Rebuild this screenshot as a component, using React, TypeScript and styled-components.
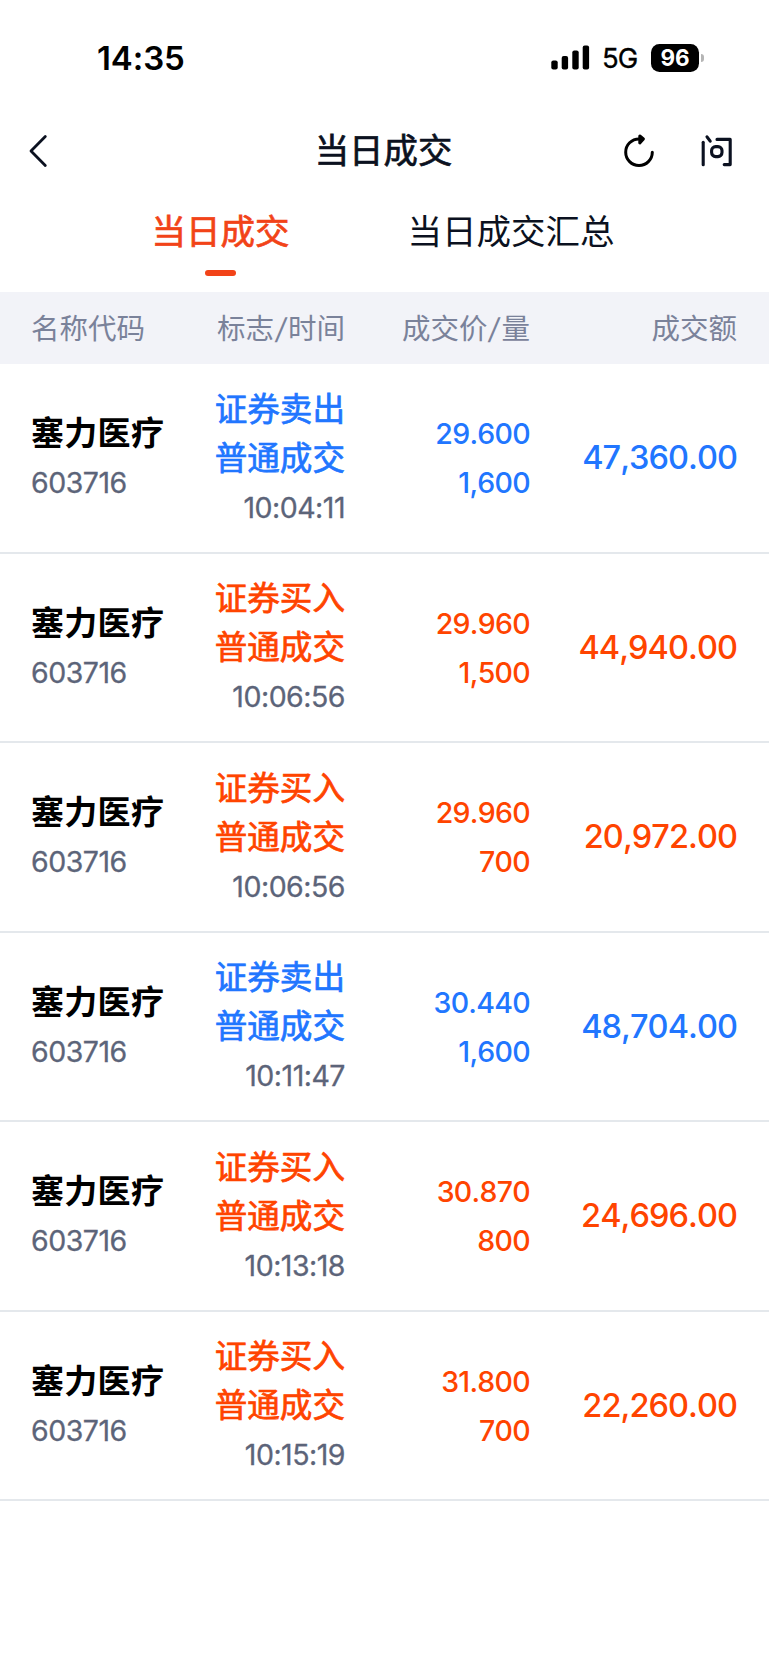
import React from "react";
import styled, { createGlobalStyle } from "styled-components";

const BLUE = "#2176ff";
const RED = "#ff4400";

const Global = createGlobalStyle`
  body {
    margin: 0;
    background: #fff;
    font-family: Inter, "Noto Sans CJK SC", sans-serif;
    font-kerning: none;
    color: #0b1120;
  }
`;

const Screen = styled.main`
  width: 769px;
  height: 1665px;
  overflow: hidden;
  background: #fff;
`;

const StatusBar = styled.header`
  height: 115px;
  box-sizing: border-box;
  padding: 0 65px 0 97px;
  display: flex;
  align-items: center;
  justify-content: space-between;
  color: #000;
`;

const Clock = styled.time`
  font-size: 33px;
  font-weight: 600;
  line-height: 40px;
  letter-spacing: -0.1px;
`;

const StatusRight = styled.div`
  display: flex;
  align-items: center;
`;

const Network = styled.span`
  margin-left: 12px;
  width: 37px;
  font-size: 27.5px;
  line-height: 32px;
  letter-spacing: -1px;
  padding-top: 1px;
  -webkit-text-stroke: 0.3px currentColor;
`;

const Battery = styled.span`
  margin-left: 12px;
  width: 48px;
  height: 28px;
  border-radius: 8.5px;
  background: #000;
  color: #fff;
  font-size: 22.5px;
  font-weight: 700;
  line-height: 28px;
  text-align: center;
`;

const BatteryTip = styled.span`
  margin-left: 2px;
  width: 3px;
  height: 8px;
  border-radius: 0 3px 3px 0;
  background: #b5b5b5;
`;

const NavBar = styled.nav`
  height: 72px;
  display: grid;
  grid-template-columns: 202px 1fr 196px;
  align-items: center;
  box-sizing: border-box;
  padding: 0 36px 0 28px;
`;

const Title = styled.h1`
  margin: 0;
  text-align: center;
  font-size: 34.4px;
  font-weight: 400;
  line-height: 48px;
  -webkit-text-stroke: 0.7px currentColor;
`;

const IconButton = styled.button`
  border: 0;
  padding: 0;
  background: none;
  color: inherit;
  display: flex;
`;

const NavActions = styled.div`
  display: flex;
  justify-content: flex-end;
  gap: 46px;
  padding-bottom: 1px;
`;

const Tabs = styled.div`
  height: 105px;
  display: flex;
  gap: 118px;
  padding-left: 151.5px;
`;

const Tab = styled.div<{ $active?: boolean }>`
  display: flex;
  flex-direction: column;
  align-items: center;
  padding-top: 20px;
  font-size: 34.5px;
  line-height: 49px;
  color: ${(p) => (p.$active ? "#f24318" : "#0b1120")};
  -webkit-text-stroke: ${(p) => (p.$active ? "0.7px" : "0")} currentColor;
`;

const TabMark = styled.span`
  margin-top: 13.5px;
  width: 31px;
  height: 6px;
  border-radius: 3px;
  background: #f24318;
`;

const columns = `
  display: grid;
  grid-template-columns: 110px 204px 185px 207px;
  align-items: center;
  box-sizing: border-box;
`;

const TableHead = styled.div`
  ${columns}
  padding: 2px 32px 0 31px;
  height: 72px;
  background: #f2f3f8;
  color: #7a829a;
  font-size: 28.5px;
  line-height: 40px;
`;

const HeadCell = styled.span<{ $left?: boolean }>`
  text-align: ${(p) => (p.$left ? "left" : "right")};
  white-space: nowrap;
`;

const Slash = styled.span`
  display: inline-block;
  margin: 0 1.8px;
  transform: skewX(-9deg);
`;

const Row = styled.div`
  ${columns}
  padding: 1px 32px 0 31px;
  height: 189.5px;
  border-bottom: 2px solid #e4e8ec;
`;

const Cell = styled.div<{ $tone?: string; $left?: boolean }>`
  display: flex;
  flex-direction: column;
  align-items: ${(p) => (p.$left ? "flex-start" : "flex-end")};
  color: ${(p) => p.$tone ?? "#5c6479"};
  line-height: 49px;
  white-space: nowrap;
`;

const StockName = styled.span`
  font-size: 33px;
  font-weight: 700;
  letter-spacing: 0.3px;
  color: #000;
`;

const Plain = styled.span`
  font-size: 28.5px;
  letter-spacing: -0.5px;
  -webkit-text-stroke: 0.3px currentColor;
`;

const Action = styled.span<{ $tone: string }>`
  font-size: 32.6px;
  color: ${(p) => p.$tone};
  -webkit-text-stroke: 0.7px currentColor;
`;

const Figure = styled.span`
  font-size: 28.5px;
  font-weight: 500;
  letter-spacing: -0.7px;
`;

const Amount = styled.span`
  padding-bottom: 1px;
  font-size: 32.5px;
  font-weight: 500;
  letter-spacing: -0.95px;
`;

type Trade = { side: "买入" | "卖出"; time: string; price: string; qty: string; amount: string };

const trades: Trade[] = [
  { side: "卖出", time: "10:04:11", price: "29.600", qty: "1,600", amount: "47,360.00" },
  { side: "买入", time: "10:06:56", price: "29.960", qty: "1,500", amount: "44,940.00" },
  { side: "买入", time: "10:06:56", price: "29.960", qty: "700", amount: "20,972.00" },
  { side: "卖出", time: "10:11:47", price: "30.440", qty: "1,600", amount: "48,704.00" },
  { side: "买入", time: "10:13:18", price: "30.870", qty: "800", amount: "24,696.00" },
  { side: "买入", time: "10:15:19", price: "31.800", qty: "700", amount: "22,260.00" },
];

const SignalIcon = () => (
  <svg width="39" height="25" viewBox="0 0 39 25" fill="currentColor">
    <rect x="0.3" y="15.5" width="6.4" height="9" rx="2" />
    <rect x="10.7" y="11" width="6.4" height="13.5" rx="2" />
    <rect x="21.3" y="5.5" width="6.4" height="19" rx="2" />
    <rect x="31.7" y="0.5" width="6.4" height="24" rx="2" />
  </svg>
);

const BackIcon = () => (
  <svg width="20" height="34" viewBox="0 0 20 34" fill="none" stroke="currentColor" strokeWidth="2.8" strokeLinecap="round" strokeLinejoin="round">
    <path d="M17.3 2.5 3 17l14.3 14.5" />
  </svg>
);

const RefreshIcon = () => (
  <svg width="32" height="34" viewBox="0 0 32 34" fill="none" stroke="#000" strokeWidth="3" strokeLinecap="round" strokeLinejoin="round">
    <path d="M29.3 18.2A13.3 13.3 0 1 1 16 4.9h2" />
    <path d="M16.8 2 20.4 5l-3.6 4z" fill="#000" />
  </svg>
);

const AskIcon = () => (
  <svg width="32" height="34" viewBox="0 0 32 34" fill="none" stroke="currentColor" strokeWidth="3.1" strokeLinecap="round" strokeLinejoin="round">
    <path d="M2.2 8.2v22.6" />
    <path d="M6 2.8 9.2 7.2" />
    <path d="M16 5.4H29.2v25.2h-6" />
    <rect x="10.6" y="12.6" width="10.4" height="10" rx="4" />
  </svg>
);

export default function App() {
  return (
    <Screen>
      <Global />
      <StatusBar>
        <Clock>14:35</Clock>
        <StatusRight>
          <SignalIcon />
          <Network>5G</Network>
          <Battery>96</Battery>
          <BatteryTip />
        </StatusRight>
      </StatusBar>
      <NavBar>
        <IconButton aria-label="返回"><BackIcon /></IconButton>
        <Title>当日成交</Title>
        <NavActions>
          <IconButton aria-label="刷新"><RefreshIcon /></IconButton>
          <IconButton aria-label="咨询"><AskIcon /></IconButton>
        </NavActions>
      </NavBar>
      <Tabs>
        <Tab $active>当日成交<TabMark /></Tab>
        <Tab>当日成交汇总</Tab>
      </Tabs>
      <TableHead>
        <HeadCell $left>名称代码</HeadCell>
        <HeadCell>标志<Slash>/</Slash>时间</HeadCell>
        <HeadCell>成交价<Slash>/</Slash>量</HeadCell>
        <HeadCell>成交额</HeadCell>
      </TableHead>
      {trades.map((t, i) => {
        const tone = t.side === "卖出" ? BLUE : RED;
        return (
          <Row key={i}>
            <Cell $left>
              <StockName>塞力医疗</StockName>
              <Plain>603716</Plain>
            </Cell>
            <Cell>
              <Action $tone={tone}>证券{t.side}</Action>
              <Action $tone={tone}>普通成交</Action>
              <Plain>{t.time}</Plain>
            </Cell>
            <Cell $tone={tone}>
              <Figure>{t.price}</Figure>
              <Figure>{t.qty}</Figure>
            </Cell>
            <Cell $tone={tone}>
              <Amount>{t.amount}</Amount>
            </Cell>
          </Row>
        );
      })}
    </Screen>
  );
}
